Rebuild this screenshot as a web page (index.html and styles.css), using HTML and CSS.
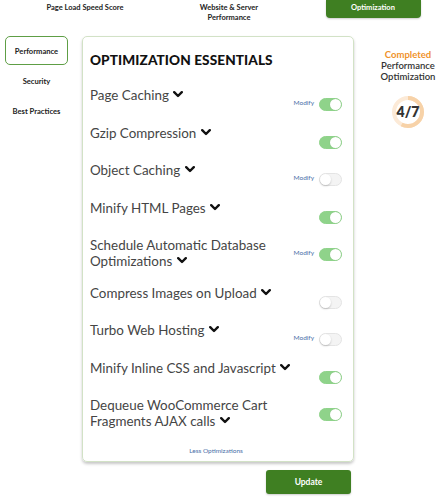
FILE: index.html
```html
<!DOCTYPE html>
<html>
<head>
<meta charset="utf-8">
<link rel="stylesheet" href="styles.css">
</head>
<body>
<header class="top">
  <div class="tab">Page Load Speed Score</div>
  <div class="tab">Website &amp; Server<br>Performance</div>
  <div class="tab"><span class="tab-active">Optimization</span></div>
</header>
<div class="main">
  <nav class="side">
    <div class="side-item side-active">Performance</div>
    <div class="side-item">Security</div>
    <div class="side-item">Best Practices</div>
  </nav>
  <section class="center">
    <div class="card">
      <h1 class="title">OPTIMIZATION ESSENTIALS</h1>
      <div class="row">
        <div class="label">Page Caching <svg class="chev" viewBox="0 0 10 7"><path d="M1.2 1.2 5 5 8.8 1.2"/></svg></div>
        <div class="ctrl"><span class="modify">Modify</span><span class="toggle on"></span></div>
      </div>
      <div class="row">
        <div class="label">Gzip Compression <svg class="chev" viewBox="0 0 10 7"><path d="M1.2 1.2 5 5 8.8 1.2"/></svg></div>
        <div class="ctrl"><span class="toggle on"></span></div>
      </div>
      <div class="row">
        <div class="label">Object Caching <svg class="chev" viewBox="0 0 10 7"><path d="M1.2 1.2 5 5 8.8 1.2"/></svg></div>
        <div class="ctrl"><span class="modify">Modify</span><span class="toggle"></span></div>
      </div>
      <div class="row">
        <div class="label">Minify HTML Pages <svg class="chev" viewBox="0 0 10 7"><path d="M1.2 1.2 5 5 8.8 1.2"/></svg></div>
        <div class="ctrl"><span class="toggle on"></span></div>
      </div>
      <div class="row">
        <div class="label">Schedule Automatic Database<br>Optimizations <svg class="chev" viewBox="0 0 10 7"><path d="M1.2 1.2 5 5 8.8 1.2"/></svg></div>
        <div class="ctrl"><span class="modify">Modify</span><span class="toggle on"></span></div>
      </div>
      <div class="row">
        <div class="label">Compress Images on Upload <svg class="chev" viewBox="0 0 10 7"><path d="M1.2 1.2 5 5 8.8 1.2"/></svg></div>
        <div class="ctrl"><span class="toggle"></span></div>
      </div>
      <div class="row">
        <div class="label">Turbo Web Hosting <svg class="chev" viewBox="0 0 10 7"><path d="M1.2 1.2 5 5 8.8 1.2"/></svg></div>
        <div class="ctrl"><span class="modify">Modify</span><span class="toggle"></span></div>
      </div>
      <div class="row">
        <div class="label">Minify Inline CSS and Javascript <svg class="chev" viewBox="0 0 10 7"><path d="M1.2 1.2 5 5 8.8 1.2"/></svg></div>
        <div class="ctrl"><span class="toggle on"></span></div>
      </div>
      <div class="row">
        <div class="label">Dequeue WooCommerce Cart<br>Fragments AJAX calls <svg class="chev" viewBox="0 0 10 7"><path d="M1.2 1.2 5 5 8.8 1.2"/></svg></div>
        <div class="ctrl"><span class="toggle on"></span></div>
      </div>
      <div class="less">Less Optimizations</div>
    </div>
    <div class="actions"><button class="update">Update</button></div>
  </section>
  <aside class="status">
    <div class="done">Completed</div>
    <div class="status-text">Performance<br>Optimization</div>
    <div class="ring">
      <svg viewBox="0 0 32 32" class="ring-svg">
        <circle cx="16" cy="16" r="14" class="ring-bg"/>
        <circle cx="16" cy="16" r="14" class="ring-fg"/>
      </svg>
      <span class="ring-num">4/7</span>
    </div>
  </aside>
</div>
</body>
</html>
```
FILE: styles.css
```css
* { box-sizing: border-box; }
body {
  margin: 0;
  width: 441px;
  height: 500px;
  background: #fff;
  font-family: Lato, "Open Sans", sans-serif;
  color: #333;
  overflow: hidden;
}
.top {
  display: grid;
  grid-template-columns: 144px 144px 144px;
  padding-left: 13px;
  height: 36px;
  align-items: start;
}
.tab {
  text-align: center;
  font-size: 7.5px;
  font-weight: 700;
  line-height: 10px;
  padding-top: 3px;
  color: #222;
}
.tab-active {
  display: block;
  width: 95px;
  height: 18px;
  margin: -3px auto 0;
  padding-top: 3px;
  background: #3f7f22;
  color: #fff;
  border-radius: 0 0 4px 4px;
  box-shadow: 0 1px 2px rgba(0,0,0,0.2);
}
.main {
  display: flex;
  align-items: flex-start;
  padding-left: 5px;
}
.side {
  width: 63px;
  display: flex;
  flex-direction: column;
  gap: 1px;
}
.side-item {
  height: 29px;
  display: flex;
  align-items: center;
  justify-content: center;
  font-size: 7.6px;
  font-weight: 700;
  color: #222;
}
.side-active {
  border: 1.5px solid #5e9e45;
  border-radius: 5px;
}
.center {
  width: 272px;
  margin-left: 14px;
}
.card {
  border: 1px solid #d2e2c6;
  border-radius: 5px;
  padding: 15px 11px 4px 7px;
  box-shadow: 0 2px 3px rgba(0,0,0,0.22);
}
.title {
  margin: 0 0 19px;
  font-size: 13.6px;
  line-height: 16px;
  font-weight: 900;
  color: #111;
  letter-spacing: 0.1px;
}
.row {
  display: flex;
  justify-content: space-between;
  align-items: flex-start;
  margin-bottom: 13.5px;
}
.label {
  font-size: 13.4px;
  line-height: 16px;
  padding-bottom: 2px;
  color: #454545;
}
.chev {
  width: 10px;
  height: 7px;
  vertical-align: 2px;
  margin-left: 1px;
}
.chev path {
  fill: none;
  stroke: #111;
  stroke-width: 2.4;
  stroke-linecap: round;
  stroke-linejoin: round;
}
.ctrl {
  display: flex;
  align-items: center;
  gap: 5px;
  padding-top: 11px;
}
.modify {
  font-size: 6.5px;
  color: #4a6fa8;
  margin-top: -4px;
}
.toggle {
  position: relative;
  width: 23px;
  height: 13px;
  border-radius: 7px;
  background: #f4f4f4;
  border: 1px solid #e4e4e4;
}
.toggle::after {
  content: "";
  position: absolute;
  top: 0;
  left: 0;
  width: 11px;
  height: 11px;
  border-radius: 50%;
  background: #fff;
  box-shadow: 0 1px 2px rgba(0,0,0,0.2);
}
.toggle.on {
  background: #8fd38a;
  border-color: #8fd38a;
}
.toggle.on::after {
  left: 10px;
  box-shadow: 0 0 1px rgba(0,0,0,0.15);
}
.less {
  text-align: center;
  font-size: 6.5px;
  line-height: 12px;
  color: #4a6fa8;
  margin-top: 3px;
}
.actions {
  display: flex;
  justify-content: flex-end;
  padding-right: 3px;
  margin-top: 8px;
}
.update {
  width: 85px;
  height: 24px;
  border: none;
  border-radius: 3px;
  background: #3f7f22;
  color: #fff;
  font-family: Lato, sans-serif;
  font-size: 8.5px;
  font-weight: 700;
  box-shadow: 0 1px 2px rgba(0,0,0,0.2);
}
.status {
  width: 66px;
  margin-left: 21px;
  padding-top: 12.5px;
  text-align: center;
  display: flex;
  flex-direction: column;
  align-items: center;
}
.done {
  font-size: 9.5px;
  line-height: 11px;
  font-weight: 700;
  color: #f0922b;
}
.status-text {
  font-size: 9.5px;
  line-height: 11px;
  color: #333;
  font-weight: 600;
}
.ring {
  position: relative;
  width: 32px;
  height: 32px;
  margin-top: 14px;
}
.ring-svg {
  width: 32px;
  height: 32px;
  transform: rotate(-90deg);
}
.ring-bg {
  fill: none;
  stroke: #fcead7;
  stroke-width: 4;
}
.ring-fg {
  fill: none;
  stroke: #f7d2a8;
  stroke-width: 4;
  stroke-dasharray: 50.3 88;
}
.ring-num {
  position: absolute;
  inset: 0;
  display: flex;
  align-items: center;
  justify-content: center;
  font-size: 14px;
  font-weight: 800;
  color: #333;
}
```
